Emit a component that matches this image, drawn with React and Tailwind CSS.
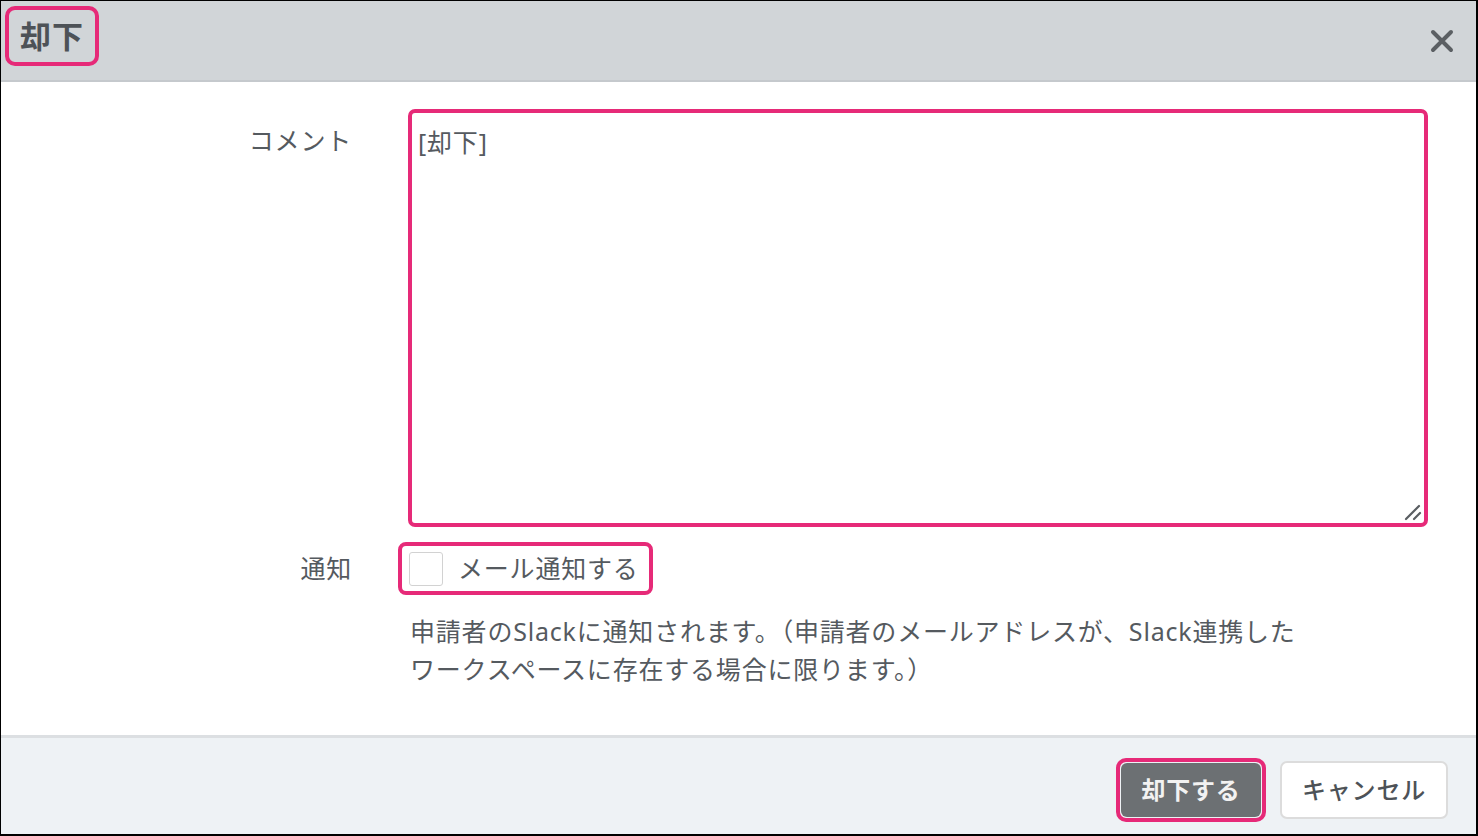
import React from "react";

export default function App() {
  return (
    <div className="w-[1478px] h-[836px] bg-white border-l border-t border-r-2 border-b-2 border-black flex flex-col overflow-hidden text-[#555a5f] tracking-[0.8px] font-['Noto_Sans','Noto_Sans_CJK_JP',sans-serif]">
      {/* Header */}
      <div className="h-[81px] shrink-0 bg-[#d1d5d8] border-b-2 border-[#c5c9cd] flex items-center justify-between pl-[4px] pr-[21px]">
        <div className="h-[60px] -mt-[9px] px-[11px] border-4 border-[#e62a78] rounded-[10px] flex items-center">
          <span className="text-[31px] font-bold leading-none text-[#4d5257] tracking-[1px]">却下</span>
        </div>
        <button className="w-[26px] h-[26px] flex items-center justify-center">
          <svg width="24" height="24" viewBox="0 0 24 24">
            <path d="M3 3 L21 21 M21 3 L3 21" stroke="#5b5f63" strokeWidth="4" strokeLinecap="round" />
          </svg>
        </button>
      </div>

      {/* Body */}
      <div className="flex-1 pt-[27px] pr-[48px]">
        <div className="flex">
          <div className="w-[351px] shrink-0 text-right text-[25px] leading-[38px] pt-[12px]">コメント</div>
          <div className="ml-[56px] flex-1 relative">
            <textarea
              defaultValue="[却下]"
              className="block w-full h-[418px] resize-none border-4 border-[#e62a78] rounded-[7px] px-[6px] py-[10px] text-[25px] leading-[38px] tracking-[0.8px] text-[#555a5f] outline-none font-['Noto_Sans','Noto_Sans_CJK_JP',sans-serif]"
            />
            <svg className="absolute right-[6px] bottom-[6px] pointer-events-none" width="18" height="18" viewBox="0 0 18 18">
              <path d="M2 16 L15 3 M10 16 L16 10" stroke="#5a5e62" strokeWidth="2.2" strokeLinecap="round" />
            </svg>
          </div>
        </div>

        <div className="flex mt-[15px]">
          <div className="w-[351px] shrink-0 text-right text-[25px] leading-[52px]">通知</div>
          <div className="ml-[46px] flex flex-col">
            <div className="h-[53px] w-[255px] border-4 border-[#e62a78] rounded-[8px] flex items-center pl-[7px]">
              <span className="w-[34px] h-[34px] border border-[#d2d2d2] rounded-[3px] bg-white" />
              <span className="ml-[15px] text-[25px] leading-none whitespace-nowrap">メール通知する</span>
            </div>
            <div className="mt-[17px] ml-[12px] text-[25px] leading-[38px] whitespace-nowrap">
              <div>申請者のSlackに通知されます。（申請者のメールアドレスが、Slack連携した</div>
              <div>ワークスペースに存在する場合に限ります。）</div>
            </div>
          </div>
        </div>
      </div>

      {/* Footer */}
      <div className="h-[99px] shrink-0 bg-[#eef2f5] border-t-[3px] border-[#dcdfe2] flex items-center justify-end pr-[28px] pt-[8px]">
        <div className="border-4 border-[#e62a78] rounded-[10px] p-[1px]">
          <button className="w-[140px] h-[54px] bg-[#6c7073] rounded-[6px] text-[24px] font-bold text-[#f2f2f2] leading-none tracking-[0.8px]">却下する</button>
        </div>
        <button className="ml-[14px] w-[168px] h-[58px] bg-white border-2 border-[#dcdcdc] rounded-[7px] text-[24px] font-medium text-[#4d5257] leading-none tracking-[0.8px]">キャンセル</button>
      </div>
    </div>
  );
}
